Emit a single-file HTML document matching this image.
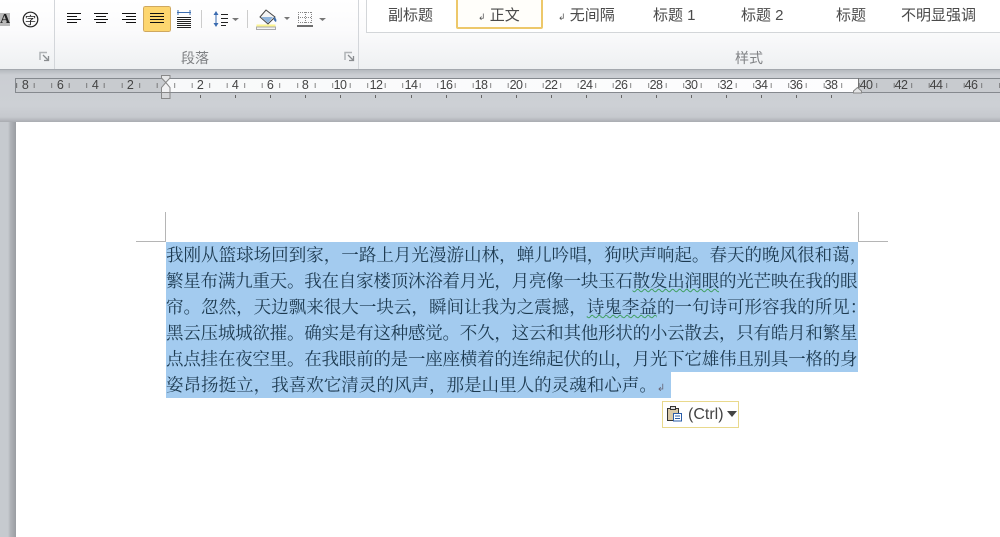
<!DOCTYPE html>
<html><head><meta charset="utf-8">
<style>
html,body{margin:0;padding:0}
body{width:1000px;height:537px;overflow:hidden;position:relative;background:#c6cacf;font-family:"Liberation Sans","Noto Sans CJK SC",sans-serif}
.a{position:absolute}
#ribbon{left:0;top:0;width:1000px;height:69px;background:linear-gradient(#fff 0,#fbfbfc 30px,#eef0f2 69px);border-bottom:1px solid #a4a8ae}
.sep{width:1px;top:0;height:69px;background:#d3d6da}
.sty{top:6px;font-size:15px;line-height:20px;color:#4a4a4a;white-space:nowrap}
.grp{top:49px;font-size:14px;line-height:18px;color:#808285;white-space:nowrap}
.arw{font-size:9px;color:#555}
#band{left:0;top:70px;width:1000px;height:52px;background:linear-gradient(#b6babf 0,#cbced3 5px,#cdd0d5 36px,#c6c9ce 47px,#a9acb1 52px)}
#ruler{left:15px;top:78px;width:985px;height:15px;box-sizing:border-box;border:1px solid #85898e;border-right:0;background:#c8cbcf}
#rw{left:166px;top:79px;width:692px;height:13px;background:linear-gradient(90deg,#f8f9fa,#fdfdfe)}
#tk{left:16px;top:83px;width:984px;height:5px;background:repeating-linear-gradient(90deg,#555 0,#555 1px,transparent 1px,transparent 17.55px);background-position:.2px 0;opacity:.7}
.n{top:78px;width:24px;margin-left:-12px;text-align:center;font:12.5px/15px "Liberation Sans",sans-serif;color:#444;letter-spacing:-.6px}
.m{top:95px;width:1px;height:3px;background:#666}
#page{left:16px;top:122px;width:984px;height:415px;background:#fff}
.sel{background:#a3cbef;left:166px;height:26px}
.ln{left:166px;width:720px;height:26px;font:17.55px/26px "Noto Serif CJK SC","Liberation Serif",serif;color:#1d3a50;white-space:nowrap;text-spacing-trim:space-all;font-feature-settings:"palt" 0;font-kerning:none}
.j{letter-spacing:-.25px}
.ln u{text-decoration:underline wavy #3f9f5f 1px;text-underline-offset:1px}
.cm{background:#b5b5b5}
#pb{left:662px;top:401px;width:77px;height:27px;box-sizing:border-box;border:1px solid #e9d98c;background:#fff}
</style></head><body>
<div class="a" id="ribbon"></div>
<div class="a sep" style="left:54px"></div>
<div class="a sep" style="left:358px"></div>

<div class="a" style="left:0;top:13px;width:10px;height:13px;background:#b9b9b9;font:bold 14px/13px 'Liberation Serif',serif;color:#222;text-align:center;overflow:hidden">A</div>
<svg class="a" style="left:22px;top:11px" width="17" height="17"><circle cx="8.5" cy="8.5" r="7.3" fill="none" stroke="#222" stroke-width="1.2"/><text x="8.5" y="13" text-anchor="middle" font-size="11" fill="#222" font-family="Noto Sans CJK SC">字</text></svg>

<svg class="a" style="left:60px;top:0" width="140" height="36" shape-rendering="crispEdges">
<rect x="83.500" y="6.500" width="27" height="25" rx="2" fill="#fdd66f" stroke="#cfa85f"/>
<g stroke="#111" stroke-width="1">
<path d="M7 13.500H21M7 16.500H17M7 19.500H21M7 22.500H17"/>
<path d="M34 13.500H48M36 16.500H46M34 19.500H48M36 22.500H46"/>
<path d="M62 13.500H76M66 16.500H76M62 19.500H76M66 22.500H76"/>
<path d="M90 13.500H104M90 16.500H104M90 19.500H104M90 22.500H104"/>
</g></svg>
<svg class="a" style="left:174px;top:9px" width="20" height="20"><path d="M3 3.500H17M4 1V6M16 1V6" stroke="#3b6cb0" fill="none"/><path d="M3 8.500H17M3 10.500H17M3 12.500H17M3 14.500H17M3 16.500H17M3 18.500H17" stroke="#222" stroke-width="1" shape-rendering="crispEdges"/></svg>
<div class="a" style="left:201px;top:10px;width:1px;height:18px;background:#ccc"></div>
<svg class="a" style="left:212px;top:9px" width="30" height="20"><path d="M4 2L1.500 6H6.500ZM4 18L1.500 14H6.500Z" fill="#3a6bb0"/><path d="M4 6V14" stroke="#3a6bb0"/><path d="M9 5.500H16M9 9.500H16M9 13.500H16M9 16.500H14" stroke="#222" shape-rendering="crispEdges"/><path d="M20 9H27L23.500 12Z" fill="#777"/></svg>
<div class="a" style="left:247px;top:10px;width:1px;height:18px;background:#ccc"></div>
<svg class="a" style="left:255px;top:9px" width="36" height="21"><path d="M11 1L20 8L13 15L5 8Z" fill="#f4f4f4" stroke="#444"/><path d="M6 8H18L13 14Z" fill="#8fb4dc"/><path d="M19 8C21 9 22 11 21 13C19 12 18 10 19 8Z" fill="#3f6fae"/><rect x="1.500" y="15.500" width="19" height="2.500" fill="#fdf58f"/><rect x="1.500" y="18" width="19" height="2.500" fill="#f4f4f4" stroke="#aaa" stroke-width="1"/><path d="M29 8H35L32 11Z" fill="#777"/></svg>
<svg class="a" style="left:297px;top:11px" width="32" height="17"><path d="M1 1.500H15M1 6.500H15M1 11.500H15M1.500 1V12M8.500 1V12M14.500 1V12" stroke="#888" stroke-dasharray="1 1" fill="none"/><path d="M0 15H16" stroke="#111" stroke-width="1.200"/><path d="M22 7H29L25.500 10Z" fill="#777"/></svg>

<svg class="a" style="left:39px;top:51px" width="11" height="11"><path d="M1 9V1.500H8" fill="none" stroke="#b0b3b6" stroke-width="1.500"/><path d="M4 4L9 9M5 9.500H9.500V5" fill="none" stroke="#8a8d90" stroke-width="1.300"/></svg>
<svg class="a" style="left:344px;top:51px" width="11" height="11"><path d="M1 9V1.500H8" fill="none" stroke="#b0b3b6" stroke-width="1.500"/><path d="M4 4L9 9M5 9.500H9.500V5" fill="none" stroke="#8a8d90" stroke-width="1.300"/></svg>
<div class="a grp" style="left:181px">段落</div>
<div class="a grp" style="left:735px">样式</div>

<div class="a" style="left:366px;top:0;width:634px;height:33px;box-sizing:border-box;border:1px solid #d3d6d9;border-top:0;border-right:0;background:#fff"></div>
<div class="a" style="left:456px;top:-2px;width:87px;height:31px;box-sizing:border-box;border:2px solid #edc86a;border-radius:2px;background:#fffefa"></div>
<div class="a sty" style="left:388px">副标题</div>
<div class="a sty" style="left:478px"><span class="arw">↲</span> 正文</div>
<div class="a sty" style="left:558px"><span class="arw">↲</span> 无间隔</div>
<div class="a sty" style="left:653px">标题 1</div>
<div class="a sty" style="left:741px">标题 2</div>
<div class="a sty" style="left:836px">标题</div>
<div class="a sty" style="left:901px">不明显强调</div>

<div class="a" id="band"></div>
<div class="a" id="ruler"></div>
<div class="a" id="rw"></div>
<div class="a" style="left:858px;top:78px;width:1px;height:15px;background:#777"></div>
<div class="a" id="tk"></div>
<div class="a n" style="left:25px">8</div><div class="a n" style="left:60px">6</div><div class="a n" style="left:95px">4</div><div class="a n" style="left:130px">2</div>
<div class="a n" style="left:200px">2</div><div class="a n" style="left:235px">4</div><div class="a n" style="left:270px">6</div><div class="a n" style="left:305px">8</div>
<div class="a n" style="left:340px">10</div><div class="a n" style="left:376px">12</div><div class="a n" style="left:411px">14</div><div class="a n" style="left:446px">16</div>
<div class="a n" style="left:481px">18</div><div class="a n" style="left:516px">20</div><div class="a n" style="left:551px">22</div><div class="a n" style="left:586px">24</div>
<div class="a n" style="left:621px">26</div><div class="a n" style="left:656px">28</div><div class="a n" style="left:691px">30</div><div class="a n" style="left:726px">32</div>
<div class="a n" style="left:761px">34</div><div class="a n" style="left:796px">36</div><div class="a n" style="left:831px">38</div><div class="a n" style="left:866px">40</div>
<div class="a n" style="left:901px">42</div><div class="a n" style="left:936px">44</div><div class="a n" style="left:971px">46</div>
<div class="a m" style="left:200px"></div><div class="a m" style="left:235px"></div><div class="a m" style="left:270px"></div><div class="a m" style="left:305px"></div><div class="a m" style="left:340px"></div><div class="a m" style="left:375px"></div><div class="a m" style="left:411px"></div><div class="a m" style="left:446px"></div><div class="a m" style="left:481px"></div><div class="a m" style="left:516px"></div><div class="a m" style="left:551px"></div><div class="a m" style="left:586px"></div><div class="a m" style="left:621px"></div><div class="a m" style="left:656px"></div><div class="a m" style="left:691px"></div><div class="a m" style="left:726px"></div><div class="a m" style="left:761px"></div><div class="a m" style="left:796px"></div><div class="a m" style="left:831px"></div>
<svg class="a" style="left:161px;top:75px" width="10" height="25"><path d="M.5 .5H9V3L4.800 7.500L.5 3Z" fill="#e6e7e8" stroke="#888"/><path d="M4.800 7.500L9 12.500V17.500H.5V12.500Z" fill="#f2f2f3" stroke="#888"/><path d="M.5 17.500H9V23.500H.5Z" fill="#d4d5d7" stroke="#888"/></svg>
<svg class="a" style="left:853px;top:87px" width="10" height="7"><path d="M.5 6V4L4.500 .5L8.500 4V6Z" fill="#e4e5e6" stroke="#888"/></svg>

<div class="a" id="page"></div>
<div class="a" style="left:8px;top:122px;width:8px;height:415px;background:linear-gradient(90deg,rgba(150,153,158,0),#b0b3b8 30%,#9a9da2)"></div>

<div class="a cm" style="left:165px;top:212px;width:1px;height:30px"></div>
<div class="a cm" style="left:136px;top:241px;width:30px;height:1px"></div>
<div class="a cm" style="left:858px;top:212px;width:1px;height:30px"></div>
<div class="a cm" style="left:858px;top:241px;width:30px;height:1px"></div>

<div class="a sel" style="top:242px;width:692px;height:130px"></div>
<div class="a sel" style="top:372px;width:505px"></div>

<div class="a ln" style="top:242px">我刚从篮球场回到家，一路上月光漫游山林，蝉儿吟唱，狗吠声响起。春天的晚风很和蔼，</div>
<div class="a ln j" style="top:268px">繁星布满九重天。我在自家楼顶沐浴着月光，月亮像一块玉石<u>散发出润眼</u>的光芒映在我的眼</div>
<div class="a ln" style="top:294px">帘。忽然，天边飘来很大一块云，瞬间让我为之震撼，<u>诗鬼李益</u>的一句诗可形容我的所见：</div>
<div class="a ln j" style="top:320px">黑云压城城欲摧。确实是有这种感觉。不久，这云和其他形状的小云散去，只有皓月和繁星</div>
<div class="a ln j" style="top:346px">点点挂在夜空里。在我眼前的是一座座横着的连绵起伏的山，月光下它雄伟且别具一格的身</div>
<div class="a ln" style="top:372px">姿昂扬挺立，我喜欢它清灵的风声，那是山里人的灵魂和心声。<span style="font-size:10px;color:#667">↲</span></div>

<div class="a" id="pb"></div>
<svg class="a" style="left:666px;top:405px" width="18" height="18"><rect x="1.500" y="3.500" width="11" height="12" fill="#d9c9a8" stroke="#333"/><rect x="4.500" y="1.500" width="5" height="3" fill="#ddd" stroke="#333"/><rect x="7.500" y="8.500" width="8" height="7.500" fill="#fff" stroke="#2a5ca8"/><path d="M9 11H14M9 13.500H14" stroke="#2a5ca8"/></svg>
<div class="a" style="left:688px;top:405px;font:16px/19px 'Liberation Sans',sans-serif;color:#444;white-space:nowrap">(Ctrl)</div>
<svg class="a" style="left:727px;top:411px" width="11" height="7"><path d="M0 0H10L5 6Z" fill="#444"/></svg>
</body></html>
